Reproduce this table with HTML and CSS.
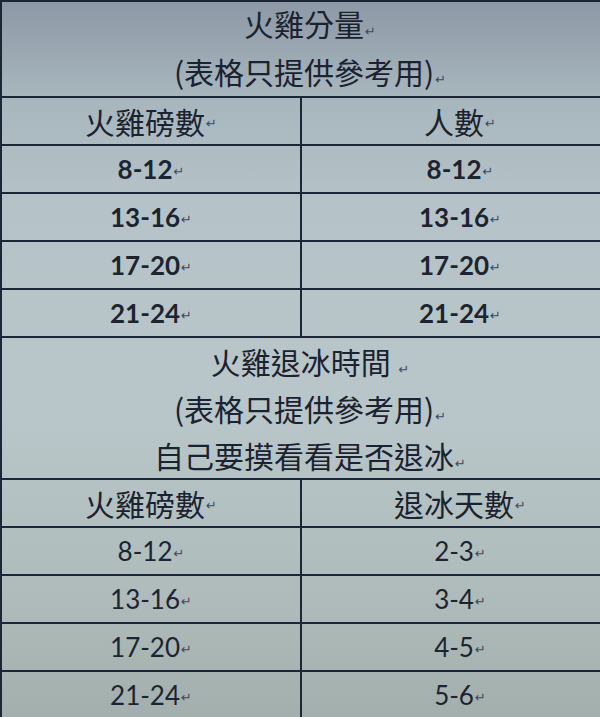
FILE: index.html
```html
<!DOCTYPE html>
<html lang="zh-Hant">
<head>
<meta charset="utf-8">
<title>火雞分量</title>
<link rel="stylesheet" href="styles.css">
</head>
<body>
<div class="sheet">
  <div class="table">
    <div class="title t1">
      <div class="line">火雞分量<span class="pm">↵</span></div>
      <div class="line">(表格只提供參考用)<span class="pm">↵</span></div>
    </div>
    <div class="grid g1">
      <div class="cell head">火雞磅數<span class="pm">↵</span></div>
      <div class="cell head">人數<span class="pm">↵</span></div>
      <div class="cell num bold">8-12<span class="pm">↵</span></div>
      <div class="cell num bold">8-12<span class="pm">↵</span></div>
      <div class="cell num bold">13-16<span class="pm">↵</span></div>
      <div class="cell num bold">13-16<span class="pm">↵</span></div>
      <div class="cell num bold">17-20<span class="pm">↵</span></div>
      <div class="cell num bold">17-20<span class="pm">↵</span></div>
      <div class="cell num bold">21-24<span class="pm">↵</span></div>
      <div class="cell num bold">21-24<span class="pm">↵</span></div>
    </div>
    <div class="title t2">
      <div class="line">火雞退冰時間 <span class="pm">↵</span></div>
      <div class="line">(表格只提供參考用)<span class="pm">↵</span></div>
      <div class="line">自己要摸看看是否退冰<span class="pm">↵</span></div>
    </div>
    <div class="grid g2">
      <div class="cell head">火雞磅數<span class="pm">↵</span></div>
      <div class="cell head">退冰天數<span class="pm">↵</span></div>
      <div class="cell num">8-12<span class="pm">↵</span></div>
      <div class="cell num">2-3<span class="pm">↵</span></div>
      <div class="cell num">13-16<span class="pm">↵</span></div>
      <div class="cell num">3-4<span class="pm">↵</span></div>
      <div class="cell num">17-20<span class="pm">↵</span></div>
      <div class="cell num">4-5<span class="pm">↵</span></div>
      <div class="cell num">21-24<span class="pm">↵</span></div>
      <div class="cell num">5-6<span class="pm">↵</span></div>
    </div>
  </div>
</div>
</body>
</html>
```

FILE: styles.css
```css
html, body {
  margin: 0;
  padding: 0;
}
body {
  width: 600px;
  height: 717px;
  overflow: hidden;
  background: linear-gradient(to bottom, #8c98a5 0px, #a6b4bc 90px, #b5c3c8 200px, #b9c6c9 420px, #aebbba 600px, #a3afac 717px);
  color: #1b2230;
  font-family: "Noto Sans CJK TC", "Noto Sans", sans-serif;
}
.sheet {
  width: 600px;
  height: 717px;
  overflow: hidden;
}
.table {
  width: 618px;
  border-top: 2px solid #1c2636;
  border-left: 2px solid #1c2636;
  box-sizing: border-box;
}
.title {
  display: flex;
  flex-direction: column;
  align-items: center;
  font-size: 30px;
  box-sizing: border-box;
}
.title .line {
  text-align: center;
  white-space: nowrap;
}
.t1 {
  height: 94px;
}
.t1 .line {
  height: 44px;
  line-height: 42px;
}
.t1 .line + .line {
  height: 50px;
  line-height: 50px;
}
.t2 {
  height: 142px;
  border-top: 2px solid #1c2636;
}
.t2 .line {
  height: 47px;
  line-height: 47px;
}
.grid {
  display: grid;
  grid-template-columns: 300px 316px;
}
.cell {
  height: 48px;
  box-sizing: border-box;
  border-top: 2px solid #1c2636;
  display: flex;
  align-items: center;
  justify-content: center;
  white-space: nowrap;
  line-height: 1;
}
.cell:nth-child(odd) {
  border-right: 2px solid #1c2636;
}
.head {
  font-size: 30px;
  font-weight: 400;
}
.num {
  font-family: "Lato", "Open Sans", sans-serif;
  font-size: 26px;
  color: #1d2431;
}
.bold {
  font-weight: 700;
}
.pm {
  font-family: "DejaVu Sans", sans-serif;
  font-size: 13px;
  font-weight: 400;
  line-height: 0;
  color: #3a4a66;
  margin-left: 1px;
  position: relative;
  top: 3px;
}
.title .pm {
  top: 0;
}
```
